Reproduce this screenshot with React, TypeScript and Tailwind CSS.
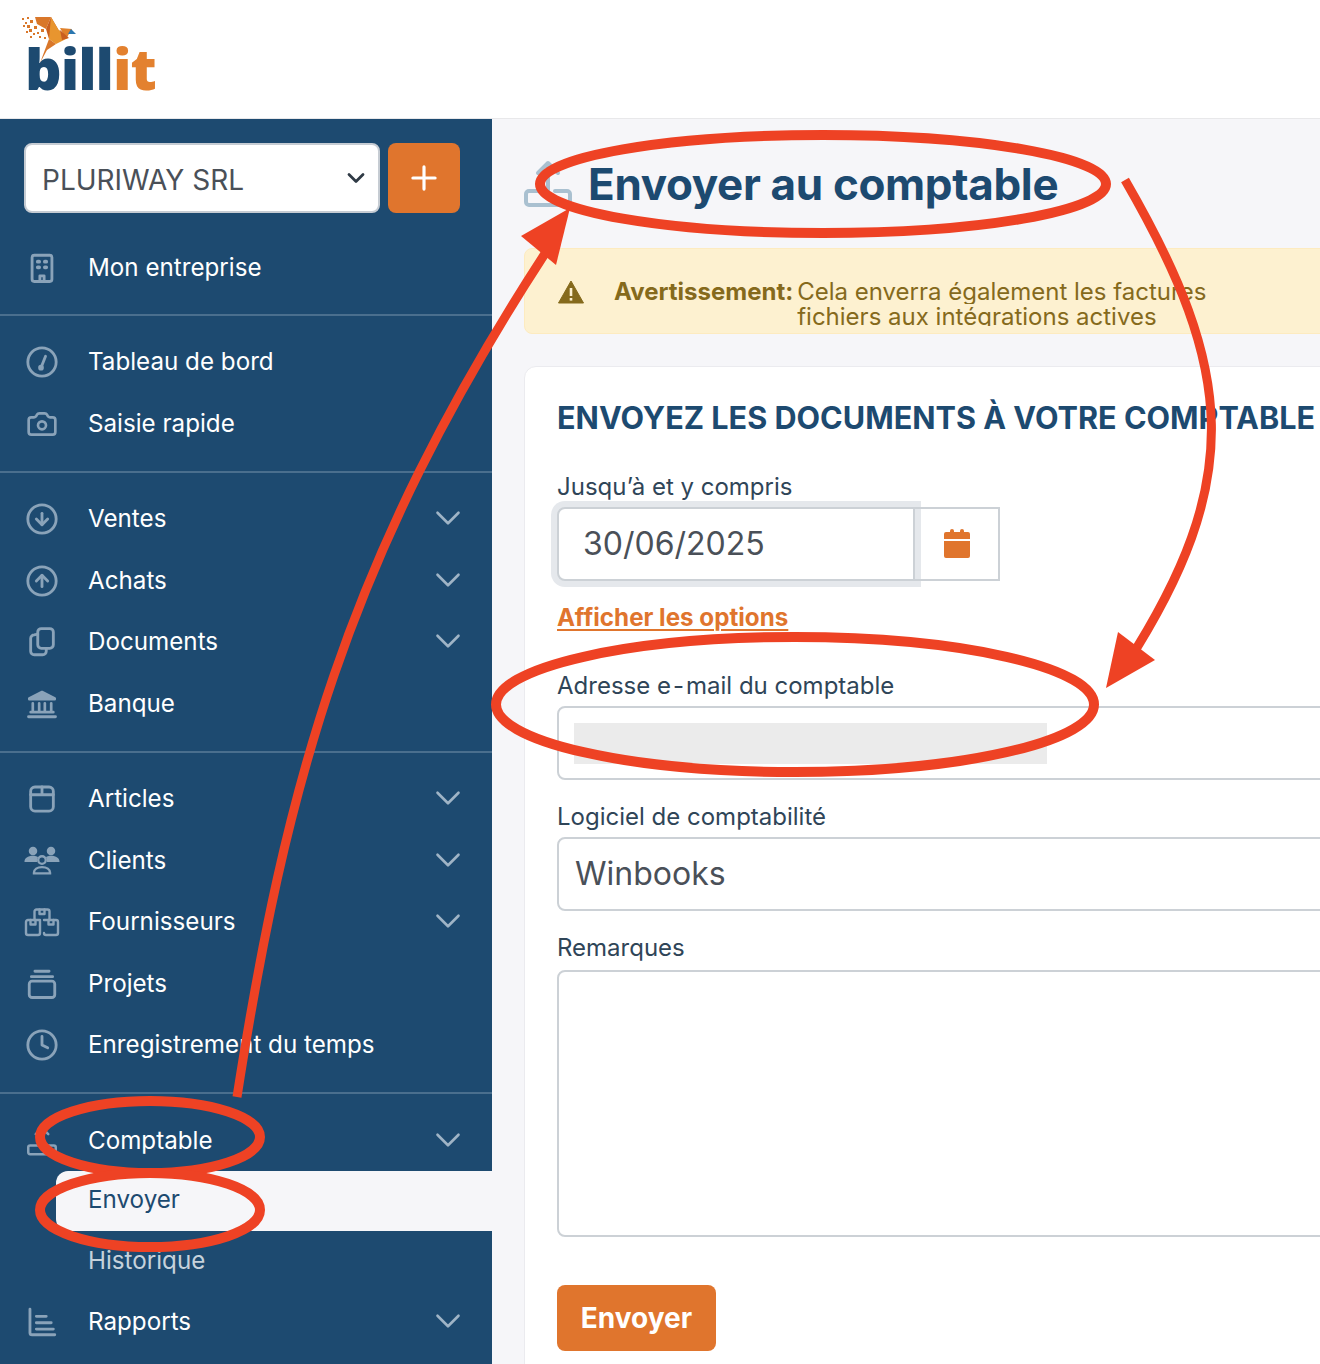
import React from 'react';
import { Camera, ChevronDown, CircleArrowDown, CircleArrowUp, Clock, Plus } from 'lucide-react';

const inter = { fontFamily: 'Inter, sans-serif' };

type IconProps = { size?: number };

const Svg = ({ size = 34, children }: IconProps & { children: React.ReactNode }) => (
  <svg width={size} height={size} viewBox="0 0 24 24" fill="none" stroke="currentColor" strokeWidth="2" strokeLinecap="round" strokeLinejoin="round">
    {children}
  </svg>
);

const BuildingIcon = () => (
  <Svg>
    <rect x="5" y="3" width="14" height="18.5" rx="1.5" />
    <path d="M9 7.5h1M14 7.5h1M9 11.5h1M14 11.5h1" strokeWidth="2.6" />
    <path d="M10.5 21v-3.5h3V21" />
  </Svg>
);

const GaugeIcon = () => (
  <Svg>
    <circle cx="12" cy="12" r="10" />
    <path d="M11.5 15.5 14.5 8" />
    <circle cx="11.3" cy="16" r="1" fill="currentColor" />
  </Svg>
);

const CopyIcon = () => (
  <Svg>
    <rect x="9" y="2.5" width="11" height="14" rx="2.5" />
    <path d="M9 6.5 6.5 7A2.5 2.5 0 0 0 4 9.5v9A2.5 2.5 0 0 0 6.5 21h6a2.5 2.5 0 0 0 2.5-2.5v-2" />
  </Svg>
);

const BankIcon = () => (
  <Svg>
    <path d="M3 8 12 3.5 21 8v.7H3Z" strokeWidth="1.8" fill="currentColor" />
    <path d="M5.500 11.500v6M10 11.500v6M14 11.500v6M18.500 11.500v6M4 17.800h16" strokeWidth="1.9" />
    <path d="M2.500 21h19" strokeWidth="2" />
  </Svg>
);

const BoxIcon = () => (
  <Svg>
    <rect x="4" y="3.500" width="16" height="17" rx="3" />
    <path d="M4 9h16M12 3.500V9" />
  </Svg>
);

const PeopleIcon = () => (
  <svg width={36} height={34} viewBox="0 0 38 34" fill="none" stroke="currentColor" strokeWidth="2.500">
    <circle cx="9.500" cy="6.500" r="4.500" fill="currentColor" stroke="none" />
    <circle cx="28.500" cy="6.500" r="4.500" fill="currentColor" stroke="none" />
    <path d="M.5 18c0-4 3.500-6.500 9-6.500 2.500 0 4.200.6 5.300 1.500-1 1.400-1.300 3.200-1 5Z" fill="currentColor" stroke="none" />
    <path d="M37.500 18c0-4-3.500-6.500-9-6.500-2.500 0-4.200.6-5.300 1.500 1 1.400 1.300 3.200 1 5Z" fill="currentColor" stroke="none" />
    <circle cx="19" cy="16" r="4" />
    <path d="M10.500 29.500c0-3.500 3.500-6 8.500-6s8.500 2.500 8.500 6v.5h-17Z" />
  </svg>
);

const BoxesIcon = () => (
  <svg width={36} height={34} viewBox="0 0 36 34" fill="none" stroke="currentColor" strokeWidth="2.400" strokeLinejoin="round" strokeLinecap="round">
    <path d="M10.500 15V6.500a2 2 0 0 1 2-2h11a2 2 0 0 1 2 2V15" />
    <path d="M15.500 4.500V9h5V4.500" />
    <path d="M16 15H4a2 2 0 0 0-2 2v11a2 2 0 0 0 2 2h10a2 2 0 0 0 2-2V15Z" />
    <path d="M20 15h12a2 2 0 0 1 2 2v11a2 2 0 0 1-2 2H22a2 2 0 0 1-2-2" />
    <path d="M6.500 15v4.500h5V15M24.500 15v4.500h5V15" />
  </svg>
);

const StackIcon = () => (
  <Svg>
    <rect x="3" y="10" width="18" height="11.500" rx="2" />
    <path d="M4.500 6.800h15M7 3h10" />
  </Svg>
);

const OutboxIcon = ({ size = 34 }: IconProps) => (
  <svg width={size} height={size} viewBox="0 0 48 48" fill="none" stroke="currentColor" strokeWidth="4" strokeLinecap="round" strokeLinejoin="round">
    <path d="M14 13 24 3l10 10M24 3v28" />
    <path d="M17 31H5a3 3 0 0 0-3 3v8a3 3 0 0 0 3 3h38a3 3 0 0 0 3-3v-8a3 3 0 0 0-3-3H31" />
  </svg>
);

const ChartIcon = () => (
  <Svg>
    <path d="M3.500 3v16.500a1.500 1.500 0 0 0 1.500 1.500H21" />
    <path d="M8 8h7M8 12.500h10.500M8 17h12" />
  </Svg>
);

const Item = ({ icon, label, chevron }: { icon: React.ReactNode; label: string; chevron?: boolean }) => (
  <div className="flex h-[61.5px] items-center pl-[23px] pr-[23px]">
    <span className="flex w-[37px] shrink-0 justify-center text-[#8aa3b9]">{icon}</span>
    <span className="ml-[28px] flex-1 text-[24.2px] whitespace-nowrap text-white">{label}</span>
    {chevron && <ChevronDown size={42} strokeWidth={1.5} className="-mt-[2px] text-[#9fb4c6]" />}
  </div>
);

const Field = ({ label, children, className }: { label: React.ReactNode; children: React.ReactNode; className?: string }) => (
  <div className={className}>
    <div className="mb-[5px] h-[30px] text-[24px] leading-[30px] whitespace-nowrap text-[#2f4558]">{label}</div>
    {children}
  </div>
);

const Logo = () => (
  <div className="relative h-[118px] w-[200px]">
    <svg className="absolute top-0 left-0" width="90" height="70" viewBox="0 0 90 70">
      <g fill="#d9772a">
        <rect x="22" y="18" width="2" height="2" />
        <rect x="25" y="22" width="2" height="2" />
        <rect x="27" y="17" width="2" height="2" />
        <rect x="23" y="25" width="2" height="2" />
        <rect x="29" y="29" width="3" height="3" />
        <rect x="30" y="20" width="3" height="3" />
        <rect x="34" y="26" width="3" height="3" />
        <rect x="30" y="36" width="2" height="2" />
        <rect x="37" y="32" width="2" height="2" />
        <rect x="39" y="36" width="2" height="2" />
        <rect x="44" y="37" width="2" height="2" />
        <rect x="26" y="31" width="2" height="2" />
        <rect x="41" y="29" width="3" height="3" />
        <rect x="27" y="25" width="3" height="3" />
        <rect x="33" y="33" width="2" height="2" />
      </g>
      <polygon points="35,17 51,17 46,29 37,24" fill="#d9772a" />
      <polygon points="51,17 46,29 49,39 58,29" fill="#c95f20" />
      <polygon points="51,17 58,29 68,38 56,44 49,39" fill="#e8952f" />
      <polygon points="60,28 72,29 66,39" fill="#e0812b" />
      <polygon points="60,30 69,38 62,40" fill="#c95f20" />
      <polygon points="71,29 76,34 68,34" fill="#2a77b0" />
      <polygon points="49,39 56,44 47,50 40,63" fill="#d9772a" />
    </svg>
    <div className="absolute top-[29px] left-[25px] text-[57px] leading-[78px] font-extrabold tracking-[-1px]" style={{ fontFamily: '"Open Sans", sans-serif' }}>
      <span className="text-[#1d4a70]">bill</span>
      <span className="text-[#e3812f]">it</span>
    </div>
  </div>
);

export default function App() {
  return (
    <div className="relative h-[1364px] w-[1320px] overflow-hidden bg-white" style={inter}>
      <header className="h-[119px] border-b border-[#e8e8ea] bg-white">
        <Logo />
      </header>

      <div className="flex h-[1245px]">
        <aside className="w-[492px] shrink-0 bg-[#1d4a70]">
          <div className="border-b-2 border-[#4a6f8e] pb-[15px]">
            <div className="flex gap-[8px] pt-[24px] pr-[32px] pl-[24px]">
              <div className="flex h-[70px] flex-1 items-center justify-between rounded-[8px] border-2 border-[#c6ccd3] bg-white pr-[8px] pl-[16px] text-[28px] text-[#4a5058]">
                <span className="pt-[3px]">PLURIWAY SRL</span>
                <ChevronDown size={28} strokeWidth={2.4} className="text-[#2f3a45]" />
              </div>
              <button className="flex h-[70px] w-[72px] items-center justify-center rounded-[8px] bg-[#e0752d] text-white">
                <Plus size={38} strokeWidth={2} />
              </button>
            </div>
            <div className="mt-[24px]">
              <Item icon={<BuildingIcon />} label="Mon entreprise" />
            </div>
          </div>

          <div className="border-b-2 border-[#4a6f8e] py-[16px]">
            <Item icon={<GaugeIcon />} label="Tableau de bord" />
            <Item icon={<Camera size={32} strokeWidth={2} />} label="Saisie rapide" />
          </div>

          <div className="border-b-2 border-[#4a6f8e] py-[16px]">
            <Item icon={<CircleArrowDown size={34} strokeWidth={2} />} label="Ventes" chevron />
            <Item icon={<CircleArrowUp size={34} strokeWidth={2} />} label="Achats" chevron />
            <Item icon={<CopyIcon />} label="Documents" chevron />
            <Item icon={<BankIcon />} label="Banque" />
          </div>

          <div className="border-b-2 border-[#4a6f8e] py-[16px]">
            <Item icon={<BoxIcon />} label="Articles" chevron />
            <Item icon={<PeopleIcon />} label="Clients" chevron />
            <Item icon={<BoxesIcon />} label="Fournisseurs" chevron />
            <Item icon={<StackIcon />} label="Projets" />
            <Item icon={<Clock size={34} strokeWidth={2} />} label="Enregistrement du temps" />
          </div>

          <div className="pt-[16px]">
            <div className="-mb-px">
              <Item icon={<OutboxIcon size={30} />} label="Comptable" chevron />
            </div>
            <div className="ml-[56px] flex h-[60px] items-center rounded-l-[12px] bg-[#f6f6f9] pb-[1px] pl-[32px] text-[24.2px] text-[#1d4a70]">Envoyer</div>
            <div className="flex h-[61px] items-center pl-[88px] text-[24.2px] text-[#c6d2dc]">Historique</div>
            <Item icon={<ChartIcon />} label="Rapports" chevron />
          </div>
        </aside>

        <main className="min-w-0 flex-1 overflow-hidden bg-[#f6f6f9] pt-[32px] pl-[32px]">
          <div className="flex h-[66px] items-center">
            <span className="text-[#a9c0d0]">
              <OutboxIcon size={48} />
            </span>
            <h1 className="ml-[16px] text-[44px] font-bold tracking-[-0.35px] whitespace-nowrap text-[#1d4a70]">Envoyer au comptable</h1>
          </div>

          <div className="mt-[31px] flex h-[86px] w-[900px] items-start rounded-[8px] border border-[#fdebc0] bg-[#fdf1d0] pt-[30px] pl-[33px] text-[24px] leading-[25px] text-[#856a1c]">
            <svg width="26" height="24" viewBox="0 0 26 24" className="mt-[1px] shrink-0">
              <path d="M13 1 25.5 23H.5Z" fill="#856a1c" stroke="#856a1c" strokeLinejoin="round" />
              <rect x="11.7" y="8" width="2.6" height="8" fill="#fdf1d0" />
              <rect x="11.7" y="18" width="2.6" height="2.6" fill="#fdf1d0" />
            </svg>
            <span className="ml-[30px] font-bold whitespace-nowrap">Avertissement:</span>
            <div className="ml-[4px] h-[47px] w-[416px] overflow-hidden whitespace-nowrap">
              <div className="h-[25px] overflow-hidden">Cela enverra également les factures et</div>
              <div>fichiers aux intégrations actives</div>
            </div>
          </div>

          <div className="mt-[32px] h-[1100px] w-[1000px] rounded-[12px] border border-[#ebebef] bg-white pt-[32px] pl-[32px]">
            <h2 className="h-[38px] text-[30.6px] leading-[38px] font-bold whitespace-nowrap text-[#1d4a70]">ENVOYEZ LES DOCUMENTS À VOTRE COMPTABLE</h2>

            <Field label="Jusqu’à et y compris" className="mt-[35px]">
              <div className="flex h-[74px]">
                <div className="flex w-[358px] items-center rounded-l-[8px] border-2 border-[#ccd1d6] bg-white pl-[24px] text-[32px] text-[#4a5058] shadow-[0_0_0_6px_#e5e8ec]">
                  30/06/2025
                </div>
                <div className="relative -ml-[2px] flex w-[87px] items-center justify-center border-2 border-[#ccd1d6]">
                  <svg width="26" height="30" viewBox="0 0 26 30" fill="#e0752d">
                    <rect x="6" y="0" width="4" height="6" rx="2" />
                    <rect x="16" y="0" width="4" height="6" rx="2" />
                    <path d="M2 3h22a2 2 0 0 1 2 2v5H0V5a2 2 0 0 1 2-2ZM0 12h26v15a2 2 0 0 1-2 2H2a2 2 0 0 1-2-2Z" />
                  </svg>
                </div>
              </div>
            </Field>

            <div className="mt-[23px] h-[28px] w-fit text-[24.2px] leading-[28px] font-bold text-[#e0752d] underline decoration-2 underline-offset-[3px]">Afficher les options</div>

            <Field label={<>Adresse e<span className="mx-[2px]">-</span>mail du comptable</>} className="mt-[39px]">
              <div className="h-[74px] rounded-[8px] border-2 border-[#ccd1d6] bg-white pt-[15px] pl-[15px]">
                <div className="h-[41px] w-[473px] bg-[#ebebeb]" />
              </div>
            </Field>

            <Field label="Logiciel de comptabilité" className="mt-[22px]">
              <div className="flex h-[74px] items-center rounded-[8px] border-2 border-[#ccd1d6] bg-white pl-[16px] text-[32px] text-[#4a5058]">Winbooks</div>
            </Field>

            <Field label="Remarques" className="mt-[22px]">
              <div className="mt-[7px] h-[267px] rounded-[8px] border-2 border-[#ccd1d6] bg-white" />
            </Field>

            <button className="mt-[48px] h-[66px] w-[159px] rounded-[8px] bg-[#e0752d] text-[28px] font-bold text-white">Envoyer</button>
          </div>
        </main>
      </div>

      <svg className="pointer-events-none absolute top-0 left-0" width="1320" height="1364" viewBox="0 0 1320 1364" fill="none" stroke="#ee4224" strokeWidth="10">
        <ellipse cx="823" cy="184" rx="283" ry="49" />
        <ellipse cx="795" cy="704.500" rx="299" ry="67.500" />
        <ellipse cx="150" cy="1137" rx="110" ry="36" />
        <ellipse cx="150" cy="1210" rx="110" ry="37" />
        <path d="M237 1097C285 790 345 560 546 252" strokeWidth="9" />
        <path d="M1125 180C1235 370 1245 480 1126 665" strokeWidth="9" />
        <polygon points="570,208 521,236 556,265" fill="#ee4224" stroke="none" />
        <polygon points="1106,688 1118,632 1155,660" fill="#ee4224" stroke="none" />
      </svg>
    </div>
  );
}
